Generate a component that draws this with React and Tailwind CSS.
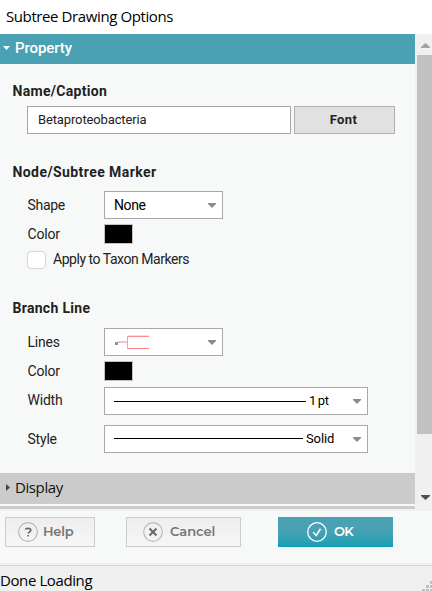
import React from "react";

const Arrow = ({ className = "" }) => (
  <svg className={`h-[5px] w-[8px] shrink-0 ${className}`} viewBox="0 0 8 5">
    <path d="M0 0h8v1L4 5 0 1z" fill="#8c8c8c" />
  </svg>
);

const Heading = ({ children, className = "" }) => (
  <h3 className={`flex h-5 items-center pl-[12.5px] font-['Roboto',sans-serif] text-[14px] font-bold text-[#222] whitespace-nowrap ${className}`}>
    {children}
  </h3>
);

const Row = ({ label, labelClass = "tracking-[-0.2px]", className = "", children }) => (
  <div className={`flex items-center pl-[27px] leading-none ${className}`}>
    <span className={`w-[77px] shrink-0 whitespace-nowrap pl-[0.5px] font-['Roboto',sans-serif] text-[14px] text-[#222] ${labelClass}`}>
      {label}
    </span>
    {children}
  </div>
);

const Select = ({ className = "", children }) => (
  <div className={`flex h-7 items-center border border-[#a8a8a8] bg-white pl-[9px] pr-[6px] font-['Roboto',sans-serif] text-[14px] text-black ${className}`}>
    {children}
    <Arrow className="ml-auto" />
  </div>
);

const Swatch = () => <div className="h-5 w-[29px] border border-[#c3c3c3] bg-black" />;

export default function App() {
  return (
    <div className="flex h-[591px] w-[432px] flex-col overflow-hidden bg-[#f7f9f8]">
      <div className="flex h-[34px] shrink-0 items-center bg-white pb-[2px] pl-[6px] font-['Open_Sans',sans-serif] text-[15px] tracking-[-0.4px] text-black whitespace-nowrap">
        Subtree Drawing Options
      </div>
      <div className="flex h-[475px] shrink-0">
        <div className="flex w-[415px] flex-col">
          <div className="flex h-[30px] items-center bg-[#49a1b3] pb-[2px] pl-[3px] font-['Roboto',sans-serif] text-[15px] font-medium tracking-[-0.1px] text-white">
            <svg className="mr-[5px] h-1 w-[7px]" viewBox="0 0 7 4">
              <path d="M0 0h7L3.5 4z" fill="#fff" />
            </svg>
            Property
          </div>
          <div className="h-[409px]">
            <Heading className="mt-[17px] tracking-[0.3px]">Name/Caption</Heading>
            <div className="mt-[5px] flex gap-[3px] pl-[27px]">
              <div className="flex h-7 w-[264px] items-center border border-[#a8a8a8] bg-white pb-[1px] pl-[10px] font-['Roboto',sans-serif] text-[13px] tracking-[-0.13px] text-[#222]">
                Betaproteobacteria
              </div>
              <div className="flex h-7 w-[101px] items-center justify-center border border-[#b1b1b1] bg-[#e1e1e1] pr-[2px] font-['Roboto',sans-serif] text-[13px] font-bold tracking-[0.4px] text-[#222]">
                Font
              </div>
            </div>
            <Heading className="mt-[28px] tracking-[0.42px]">Node/Subtree Marker</Heading>
            <Row label="Shape" className="mt-[9px]" labelClass="pb-[1px] tracking-[-0.3px]">
              <Select className="w-[119px]"><span className="pb-[1px] tracking-[-0.4px]">None</span></Select>
            </Row>
            <Row label="Color" className="mt-[5px]"><Swatch /></Row>
            <div className="mt-[7px] flex h-[18px] items-center pl-[27px]">
              <div className="h-[18px] w-[19px] rounded-[4px] border border-[#d5d5d5] bg-white" />
              <span className="ml-[7px] pb-[2px] font-['Roboto',sans-serif] text-[14px] leading-none tracking-[-0.46px] text-[#222] whitespace-nowrap">Apply to Taxon Markers</span>
            </div>
            <Heading className="mt-[29px] tracking-[0.3px]">Branch Line</Heading>
            <Row label="Lines" className="mt-[10px]">
              <Select className="w-[119px]">
                <svg className="h-[15px] w-[36px]" viewBox="0 0 36 15" shapeRendering="crispEdges">
                  <path d="M14 0h21v1H14z" fill="#fdd9db" />
                  <path d="M14 1h21v1H14z" fill="#f98f93" />
                  <path d="M14 13h21v1H14z" fill="#f98084" />
                  <path d="M13 1h1v13h-1z" fill="#f9a0a4" />
                  <path d="M4 6h9v2H4z" fill="#fbc0c3" />
                  <path d="M1 7h3v3H1z" fill="#929292" />
                </svg>
              </Select>
            </Row>
            <Row label="Color" className="mt-[5px]"><Swatch /></Row>
            <Row label="Width" className="mt-[6px]" labelClass="pb-[2px] tracking-[-0.2px]">
              <Select className="w-[264px]">
                <span className="mr-[3px] h-px w-[192px] bg-black" />
                <span className="pb-[1px] text-[13px] tracking-[-0.4px] [word-spacing:-1px]">1 pt</span>
              </Select>
            </Row>
            <Row label="Style" className="mt-[10px]">
              <Select className="w-[264px]">
                <span className="mb-[2px] mr-[3px] h-px w-[189px] bg-black" />
                <span className="pb-[1px] text-[13px] tracking-[-0.1px]">Solid</span>
              </Select>
            </Row>
          </div>
          <div className="flex h-[31px] shrink-0 items-center bg-[#cbcbcb] pb-[2px] pl-[6px] font-['Open_Sans',sans-serif] text-[15px] tracking-[-0.4px] text-[#111]">
            <svg className="mr-[5px] h-[7px] w-1" viewBox="0 0 4 7">
              <path d="M0 0l4 3.5L0 7z" fill="#444" />
            </svg>
            Display
          </div>
          <div className="mt-[2px] h-[3px] bg-[#cbcbcb]" />
        </div>
        <div className="flex w-[17px] flex-col items-end bg-[#f0f0f0]">
          <div className="flex h-[21px] w-[15px] items-center justify-center pt-[2px] pl-[2px]">
            <svg className="h-[5px] w-[9px]" viewBox="0 0 9 5"><path d="M4.5 0L9 4v1H0V4z" fill="#a3a3a3" /></svg>
          </div>
          <div className="h-[379px] w-[15px] bg-[#c1c1c1]" />
          <svg className="mr-[2px] mt-[61px] h-[5px] w-[9px]" viewBox="0 0 9 5"><path d="M0 0h9v1L4.5 5 0 1z" fill="#505050" /></svg>
        </div>
      </div>
      <div className="h-[2px] shrink-0 bg-[#f0f0f0]" />
      <div className="flex h-[52px] shrink-0 items-start pl-[5px] pt-[6px] font-['Montserrat','Open_Sans',sans-serif] text-[13px] font-semibold text-[#757575]">
        <div className="flex h-[30px] w-[90px] items-center border border-[#cbcdcc] bg-gradient-to-b from-[#eeeeee] to-[#f5f6f5] pl-[12px]">
          <svg className="mr-[5px] h-5 w-5" viewBox="0 0 20 20" fill="none">
            <circle cx="10" cy="10" r="9.3" stroke="#b9b9b9" strokeWidth="1.2" />
            <path d="M7.4 7.6C8 5.8 12.8 5.8 12.8 8.3c0 1.8-2.6 1.8-2.6 3.2M10.2 13v1.6" stroke="#686868" strokeWidth="1.7" />
          </svg>
          <span className="tracking-[-0.2px]">Help</span>
        </div>
        <div className="ml-[31px] flex h-[30px] w-[115px] items-center border border-[#cbcdcc] bg-gradient-to-b from-[#eeeeee] to-[#f5f6f5] pl-4">
          <svg className="mr-[7px] h-5 w-5" viewBox="0 0 20 20" fill="none">
            <circle cx="10" cy="10" r="9.3" stroke="#b9b9b9" strokeWidth="1.2" />
            <path d="M6.5 6.5l7 7M13.5 6.5l-7 7" stroke="#686868" strokeWidth="2" />
          </svg>
          <span>Cancel</span>
        </div>
        <div className="ml-[37px] flex h-[30px] w-[115px] items-center bg-gradient-to-b from-[#4aa1b3] from-40% to-[#08a1b3] pl-[29px] text-white">
          <svg className="mr-[7px] h-5 w-5" viewBox="0 0 20 20" fill="none" stroke="#fff">
            <circle cx="10" cy="10" r="9.3" strokeWidth="1.3" />
            <path d="M6.2 10.3l3 3.2 4.3-6.8" strokeWidth="1.6" />
          </svg>
          <span className="tracking-[-0.7px]">OK</span>
        </div>
      </div>
      <div className="h-[2px] shrink-0 bg-[#f0f0f0]" />
      <div className="flex h-[26px] shrink-0 items-center border-t border-[#d7d7d7] bg-[#f0f0f0] font-['Open_Sans',sans-serif] text-[15px] text-black">
        <span className="pt-[4px] tracking-[-0.4px] whitespace-nowrap">Done Loading</span>
        <svg className="ml-auto h-[11px] w-[10px] self-end" viewBox="0 0 10 11" fill="#bfbfbf">
          <path d="M8 1h2v3H8zM4 5h3v3H4zM8 5h2v3H8zM0 9h3v2H0zM4 9h3v2H4zM8 9h2v2H8z" />
        </svg>
      </div>
    </div>
  );
}
